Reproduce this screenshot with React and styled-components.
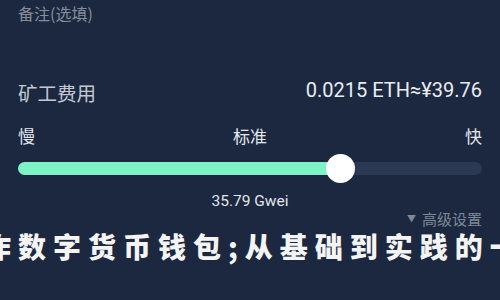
import styled, { createGlobalStyle } from 'styled-components'

const GlobalStyle = createGlobalStyle`
  html, body {
    margin: 0;
    padding: 0;
    background: #1b2840;
    overflow: hidden;
  }
  body {
    font-family: "Noto Sans CJK SC", "Noto Sans", sans-serif;
  }
`

const Page = styled.div`
  width: 500px;
  height: 300px;
  box-sizing: border-box;
  padding: 0 18px;
  display: flex;
  flex-direction: column;
  background: #1b2840;
  overflow: hidden;
`

const NoteLabel = styled.div`
  font-size: 16px;
  line-height: 26px;
  color: #858d9c;
`

const FeeRow = styled.div`
  margin-top: 49px;
  height: 30px;
  display: flex;
  justify-content: space-between;
  align-items: center;
`

const FeeLabel = styled.div`
  font-size: 19.5px;
  color: #c3c8d1;
  padding-top: 5px;
`

const FeeValue = styled.div`
  font-family: Roboto, "Liberation Sans", sans-serif;
  font-size: 20px;
  color: #e9edf2;
`

const SpeedRow = styled.div`
  margin-top: 15px;
  height: 30px;
  display: flex;
  justify-content: space-between;
  align-items: center;
  font-size: 17px;
  color: #e4e8ee;
`

const Slider = styled.div`
  margin-top: 3px;
  height: 30px;
  display: flex;
  align-items: center;
`

const Track = styled.div`
  position: relative;
  width: 100%;
  height: 13px;
  border-radius: 7px;
  background: #2c3953;
`

const Fill = styled.div`
  height: 100%;
  border-radius: 7px;
  background: #7ef3c6;
`

const Thumb = styled.div`
  position: absolute;
  top: 50%;
  width: 29px;
  height: 29px;
  margin: -14.5px 0 0 -14.5px;
  border-radius: 50%;
  background: #ffffff;
`

const GasPrice = styled.div`
  margin-top: 8px;
  text-align: center;
  font-family: Roboto, "Liberation Sans", sans-serif;
  font-size: 15.5px;
  line-height: 20px;
  color: #e2e6ec;
`

const Advanced = styled.div`
  margin-top: -1px;
  height: 18px;
  display: flex;
  justify-content: flex-end;
  align-items: center;
  gap: 6px;
  font-size: 15px;
  line-height: 18px;
  color: #7f8897;
`

const Caret = styled.span`
  font-size: 9px;
  line-height: 18px;
  color: #7f8897;
`

const Title = styled.div`
  margin: 3px 0 0 -35px;
  white-space: nowrap;
  font-size: 28px;
  line-height: 30px;
  font-weight: 900;
  letter-spacing: 7px;
  color: #f4f4f4;
`

function FeeSlider({ value }) {
  const pct = value * 100
  return (
    <Slider>
      <Track>
        <Fill style={{ width: `${pct}%` }} />
        <Thumb style={{ left: `${pct}%` }} />
      </Track>
    </Slider>
  )
}

export default function App() {
  return (
    <>
      <GlobalStyle />
      <Page>
        <NoteLabel>备注(选填)</NoteLabel>
        <FeeRow>
          <FeeLabel>矿工费用</FeeLabel>
          <FeeValue>0.0215 ETH≈¥39.76</FeeValue>
        </FeeRow>
        <SpeedRow>
          <span>慢</span>
          <span>标准</span>
          <span>快</span>
        </SpeedRow>
        <FeeSlider value={0.696} />
        <GasPrice>35.79 Gwei</GasPrice>
        <Advanced>
          <Caret>▼</Caret>
          高级设置
        </Advanced>
        <Title>作数字货币钱包;从基础到实践的一个</Title>
      </Page>
    </>
  )
}
